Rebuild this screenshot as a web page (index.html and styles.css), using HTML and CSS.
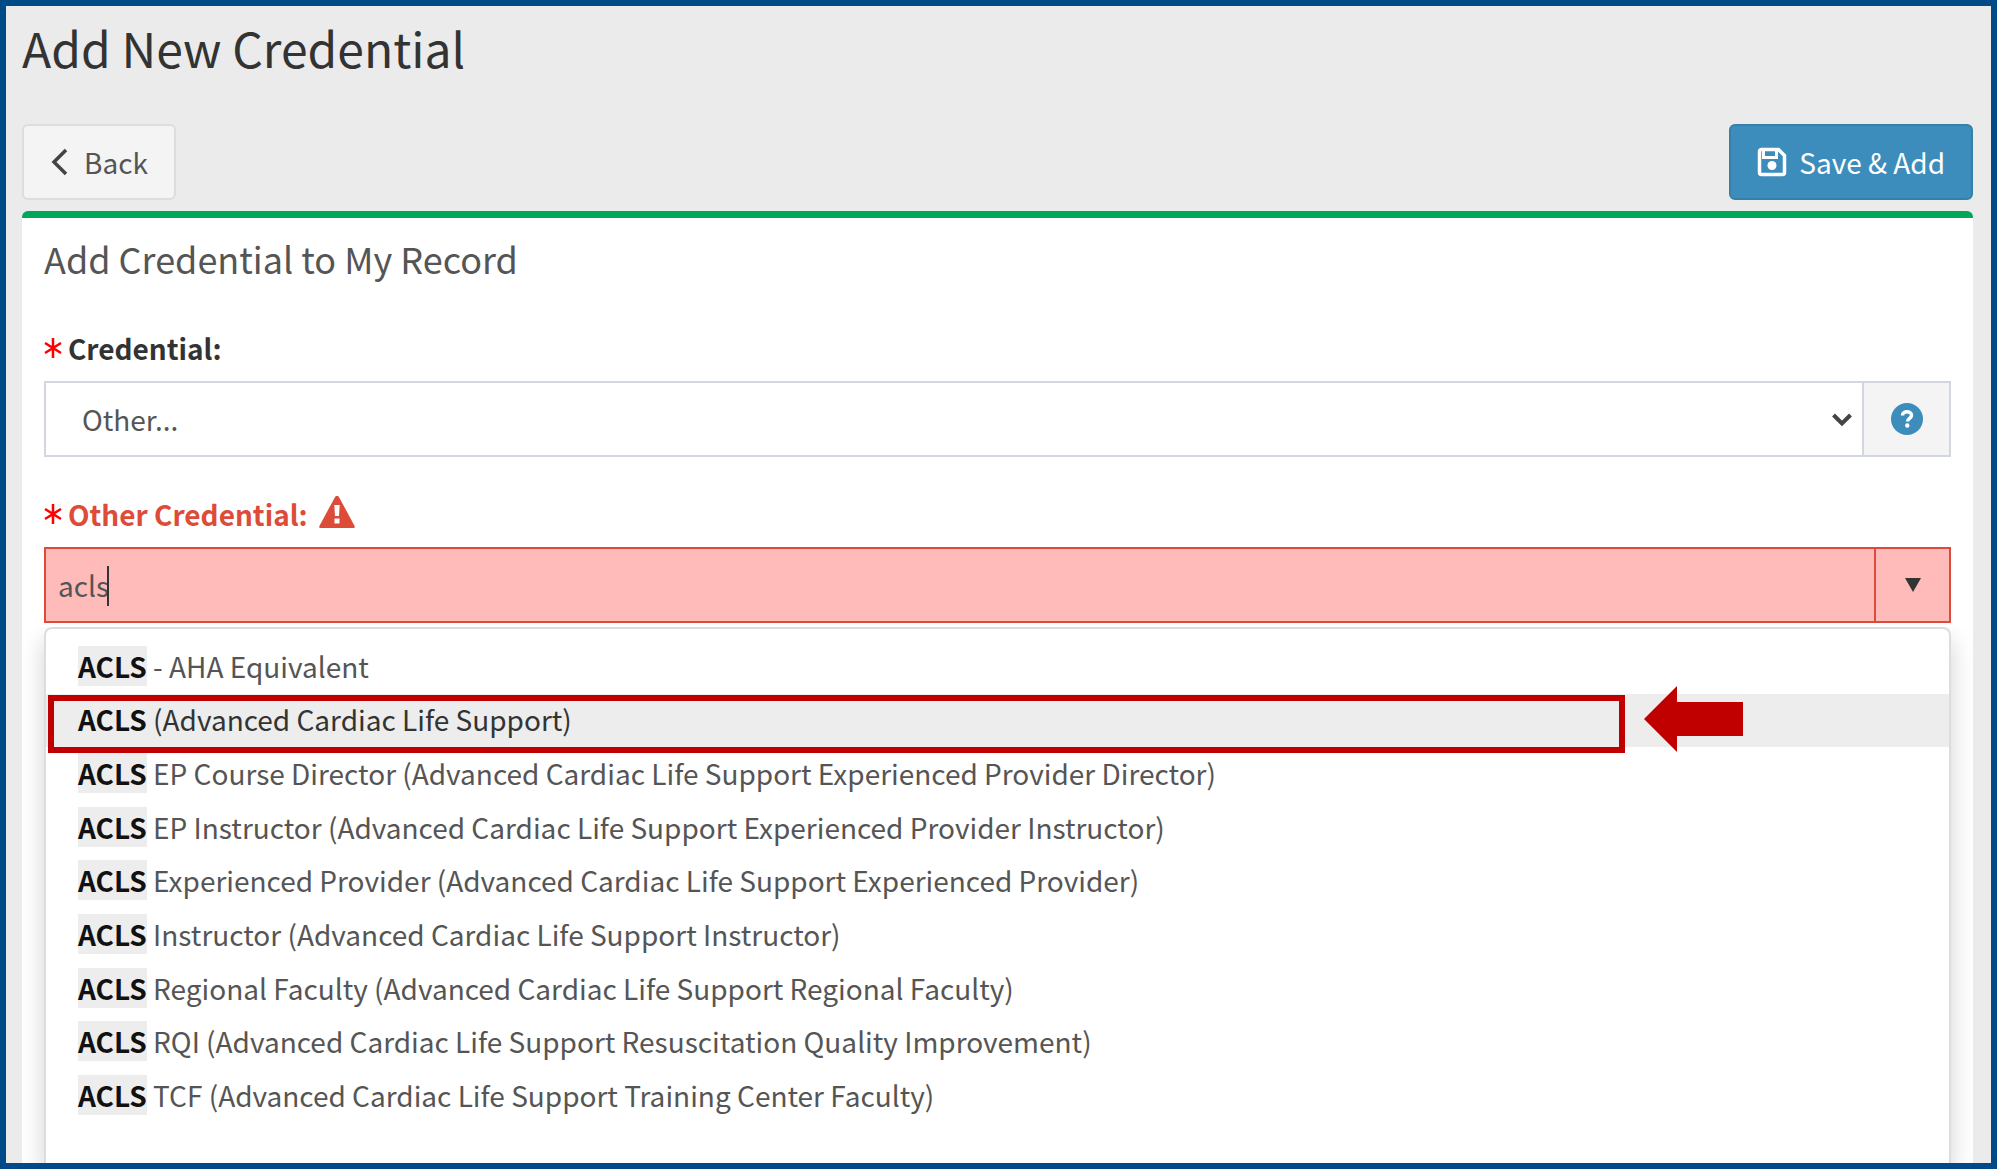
FILE: index.html
```html
<!DOCTYPE html>
<html lang="en">
<head>
<meta charset="utf-8">
<meta name="viewport" content="width=device-width, initial-scale=1">
<title>Add New Credential</title>
<link rel="stylesheet" href="styles.css">
</head>
<body>
<main class="page">
  <h1 class="page-title">Add New Credential</h1>
  <div class="toolbar">
    <button type="button" class="btn btn-default">
      <svg class="icon-back" viewBox="0 0 18 28" aria-hidden="true"><path d="M16 2 4 14l12 12" fill="none" stroke="currentColor" stroke-width="3.500"/></svg>
      Back
    </button>
    <button type="submit" form="credential-form" class="btn btn-primary">
      <svg class="icon-save" viewBox="0 0 30 30" aria-hidden="true"><path d="M4.500 2.500h17l6 6v17a2 2 0 0 1-2 2h-21a2 2 0 0 1-2-2v-21a2 2 0 0 1 2-2z" fill="none" stroke="currentColor" stroke-width="3.500"/><path d="M6.500 3v7.500h13V3" fill="none" stroke="currentColor" stroke-width="3"/><circle cx="15" cy="18.500" r="4.500" fill="currentColor"/></svg>
      Save &amp; Add
    </button>
  </div>

  <form class="panel" id="credential-form">
    <h2 class="panel-title">Add Credential to My Record</h2>

    <div class="field-label">
      <svg class="icon-required" viewBox="0 0 18 20" aria-hidden="true"><path d="M9 0v20M1 5l16 10M17 5 1 15" stroke="currentColor" stroke-width="2.500"/></svg>
      <label for="credential">Credential:</label>
    </div>
    <div class="control">
      <div class="select-wrap">
        <select id="credential" class="select"><option>Other...</option></select>
        <svg class="icon-chevron" viewBox="0 0 20 14" aria-hidden="true"><path d="m1.500 2 8.500 8.500L18.500 2" fill="none" stroke="currentColor" stroke-width="4"/></svg>
      </div>
      <button type="button" class="addon" aria-label="Help">
        <svg class="icon-help" viewBox="0 0 32 32" aria-hidden="true"><circle cx="16" cy="16" r="16" fill="#3c8dbc"/><path d="M11.500 12.500C11.500 7.500 20.500 7.500 20.500 12.300c0 3-4 3-4 6.200" fill="none" stroke="#fff" stroke-width="3.500"/><circle cx="16.300" cy="22.500" r="2.200" fill="#fff"/></svg>
      </button>
    </div>

    <div class="field-label field-label-error">
      <svg class="icon-required" viewBox="0 0 18 20" aria-hidden="true"><path d="M9 0v20M1 5l16 10M17 5 1 15" stroke="currentColor" stroke-width="2.500"/></svg>
      <label for="other">Other Credential:</label>
      <svg class="icon-warning" viewBox="0 0 36 32" aria-hidden="true"><path fill="currentColor" fill-rule="evenodd" d="M18 0c1 0 1.700.500 2.200 1.400L35.600 30c.5 1 0 2-1.200 2H1.600c-1.200 0-1.700-1-1.200-2L15.800 1.400C16.300.5 17 0 18 0zM15.300 9l.7 11h4l.7-11zM15.500 22.500v5h5v-5z"/></svg>
    </div>
    <div class="control control-error">
      <div class="input-wrap">
        <input id="other" class="input" type="text" value="acls" autocomplete="off">
        <span class="caret"></span>
      </div>
      <button type="button" class="toggle" aria-label="Show options">
        <svg class="icon-triangle" viewBox="0 0 16 14" aria-hidden="true"><path d="M0 0h16L8 14z" fill="currentColor"/></svg>
      </button>
    </div>

    <div class="dropdown">
      <ul class="options" role="listbox" aria-label="Other Credential">
        <li class="option" role="option"><span><mark>ACLS</mark> - AHA Equivalent</span></li>
        <li class="option option-active" role="option" aria-selected="true"><span><mark>ACLS</mark> (Advanced Cardiac Life Support)</span>
          <span class="callout"></span>
          <svg class="callout-arrow" viewBox="0 0 99 66" aria-hidden="true"><path d="M0 33 33 0v16h66v34H33v16z" fill="#c00000"/></svg>
        </li>
        <li class="option" role="option"><span><mark>ACLS</mark> EP Course Director (Advanced Cardiac Life Support Experienced Provider Director)</span></li>
        <li class="option" role="option"><span><mark>ACLS</mark> EP Instructor (Advanced Cardiac Life Support Experienced Provider Instructor)</span></li>
        <li class="option" role="option"><span><mark>ACLS</mark> Experienced Provider (Advanced Cardiac Life Support Experienced Provider)</span></li>
        <li class="option" role="option"><span><mark>ACLS</mark> Instructor (Advanced Cardiac Life Support Instructor)</span></li>
        <li class="option" role="option"><span><mark>ACLS</mark> Regional Faculty (Advanced Cardiac Life Support Regional Faculty)</span></li>
        <li class="option" role="option"><span><mark>ACLS</mark> RQI (Advanced Cardiac Life Support Resuscitation Quality Improvement)</span></li>
        <li class="option" role="option"><span><mark>ACLS</mark> TCF (Advanced Cardiac Life Support Training Center Faculty)</span></li>
      </ul>
    </div>
  </form>
</main>
</body>
</html>
```
FILE: styles.css
```css
* {
  box-sizing: border-box;
}

body {
  margin: 0;
  font: 28px/40px "Noto Sans CJK JP", "Noto Sans", sans-serif;
  color: #555;
}

button,
input,
select {
  font: inherit;
  color: inherit;
  margin: 0;
}

svg {
  display: block;
  flex: none;
}

.page {
  display: flex;
  flex-direction: column;
  min-height: 100vh;
  padding: 0 18px 0 16px;
  background: #ebebeb;
  border: 6px solid #004b87;
}

.page-title {
  margin: 8px 0 44px;
  font-size: 48px;
  line-height: 66px;
  font-weight: 400;
  color: #333;
}

.toolbar {
  display: flex;
  justify-content: space-between;
  margin-bottom: 11px;
}

.btn {
  display: flex;
  align-items: center;
  height: 76px;
  padding: 0 26px;
  border: 2px solid #ddd;
  border-radius: 6px;
}

.btn-default {
  gap: 16px;
  background: #f4f4f4;
}

.btn-primary {
  gap: 12px;
  background: #3c8dbc;
  border-color: #367fa9;
  color: #fff;
}

.icon-back {
  width: 18px;
  height: 28px;
  color: #444;
}

.icon-save {
  width: 30px;
  height: 30px;
}

.panel {
  flex: 1;
  display: flex;
  flex-direction: column;
  padding: 16px 22px 0;
  background: #fff;
  border-top: 7px solid #00a65a;
  border-radius: 6px 6px 0 0;
}

.panel-title {
  margin: 0 0 46px;
  font-size: 36px;
  line-height: 48px;
  font-weight: 400;
}

.field-label {
  display: flex;
  align-items: center;
  gap: 6px;
  margin-bottom: 13px;
  font-weight: 700;
  color: #333;
}

.field-label-error {
  margin-top: 37px;
  color: #dd4b39;
}

.icon-required {
  width: 18px;
  height: 20px;
  color: #f00;
}

.icon-warning {
  width: 36px;
  height: 32px;
  margin: 0 0 4px 5px;
}

.control {
  display: flex;
  height: 76px;
  border: 2px solid #d2d6de;
}

.control-error {
  border-color: #dd4b39;
  background: #ffbaba;
}

.select-wrap,
.input-wrap {
  position: relative;
  flex: 1;
  display: flex;
}

.select {
  flex: 1;
  appearance: none;
  padding: 0 36px;
  border: 0;
  background: #fff;
}

.icon-chevron {
  position: absolute;
  right: 10px;
  top: 30px;
  width: 20px;
  height: 14px;
  color: #444;
  pointer-events: none;
}

.addon,
.toggle {
  display: flex;
  align-items: center;
  justify-content: center;
  padding: 0;
  border: 0;
}

.addon {
  width: 87px;
  border-left: 2px solid #d2d6de;
  background: #f4f4f4;
}

.icon-help {
  width: 32px;
  height: 32px;
}

.input {
  flex: 1;
  padding: 0 12px;
  border: 0;
  background: transparent;
}

.caret {
  position: absolute;
  left: 61px;
  top: 17px;
  width: 2px;
  height: 40px;
  background: #333;
}

.toggle {
  width: 75px;
  border-left: 2px solid #dd4b39;
  background: transparent;
  color: #333;
}

.icon-triangle {
  width: 16px;
  height: 14px;
}

.dropdown {
  flex: 1;
  margin-top: 4px;
  padding: 11px 0 38px;
  background: #fff;
  border: 2px solid #ddd;
  border-bottom: 0;
  border-radius: 8px 8px 0 0;
  box-shadow: 0 12px 24px rgba(0, 0, 0, 0.18);
  clip-path: inset(0 -22px);
}

.options {
  display: grid;
  grid-auto-rows: 1fr;
  min-height: 483px;
  margin: 0;
  padding: 0;
  list-style: none;
}

.option {
  position: relative;
  display: flex;
  align-items: center;
  padding: 0 32px 2px;
}

.option-active {
  background: #ededed;
  color: #333;
}

.option mark {
  display: inline-block;
  background: #ededed;
  color: #111;
  font-weight: 700;
}

.callout {
  position: absolute;
  inset: 1px 324px -6px 2px;
  border: 6px solid #c00000;
  z-index: 1;
}

.callout-arrow {
  position: absolute;
  right: 206px;
  top: -8px;
  width: 99px;
  height: 66px;
}
```
